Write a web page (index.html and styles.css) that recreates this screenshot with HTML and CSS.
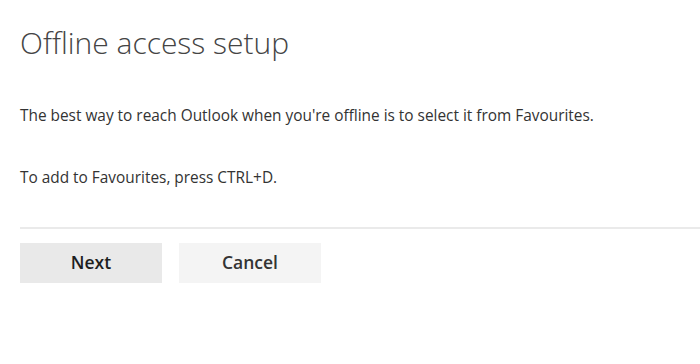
FILE: index.html
```html
<!DOCTYPE html>
<html>
<head>
<meta charset="utf-8">
<link rel="stylesheet" href="styles.css">
</head>
<body>
<div class="page">
  <h1 class="title">Offline access setup</h1>
  <p class="text first">The best way to reach Outlook when you're offline is to select it from Favourites.</p>
  <p class="text second">To add to Favourites, press CTRL+D.</p>
  <div class="divider"></div>
  <div class="actions">
    <button class="btn btn-primary">Next</button>
    <button class="btn btn-secondary">Cancel</button>
  </div>
</div>
</body>
</html>
```
FILE: styles.css
```css
html, body {
  margin: 0;
  padding: 0;
  background: #ffffff;
}
.page {
  padding-left: 20px;
  font-family: "Open Sans", "Noto Sans", sans-serif;
  color: #333333;
}
.title {
  margin: 24px 0 0 0;
  font-size: 30px;
  line-height: 38px;
  font-weight: 300;
  color: #444444;
}
.text {
  margin: 0;
  font-size: 15.4px;
  line-height: 20px;
  color: #333333;
}
.first {
  margin-top: 44px;
}
.second {
  margin-top: 42px;
}
.divider {
  margin-top: 39px;
  height: 2px;
  background: #eaeaea;
}
.actions {
  margin-top: 14px;
  display: flex;
  gap: 17px;
}
.btn {
  width: 142px;
  height: 40px;
  border: none;
  padding: 0 0 2px 0;
  font-family: "Open Sans", "Noto Sans", sans-serif;
  font-size: 17.5px;
  font-weight: 600;
}
.btn-primary {
  background: #e9e9e9;
  color: #1e1e1e;
}
.btn-secondary {
  background: #f4f4f4;
  color: #333333;
}
```
